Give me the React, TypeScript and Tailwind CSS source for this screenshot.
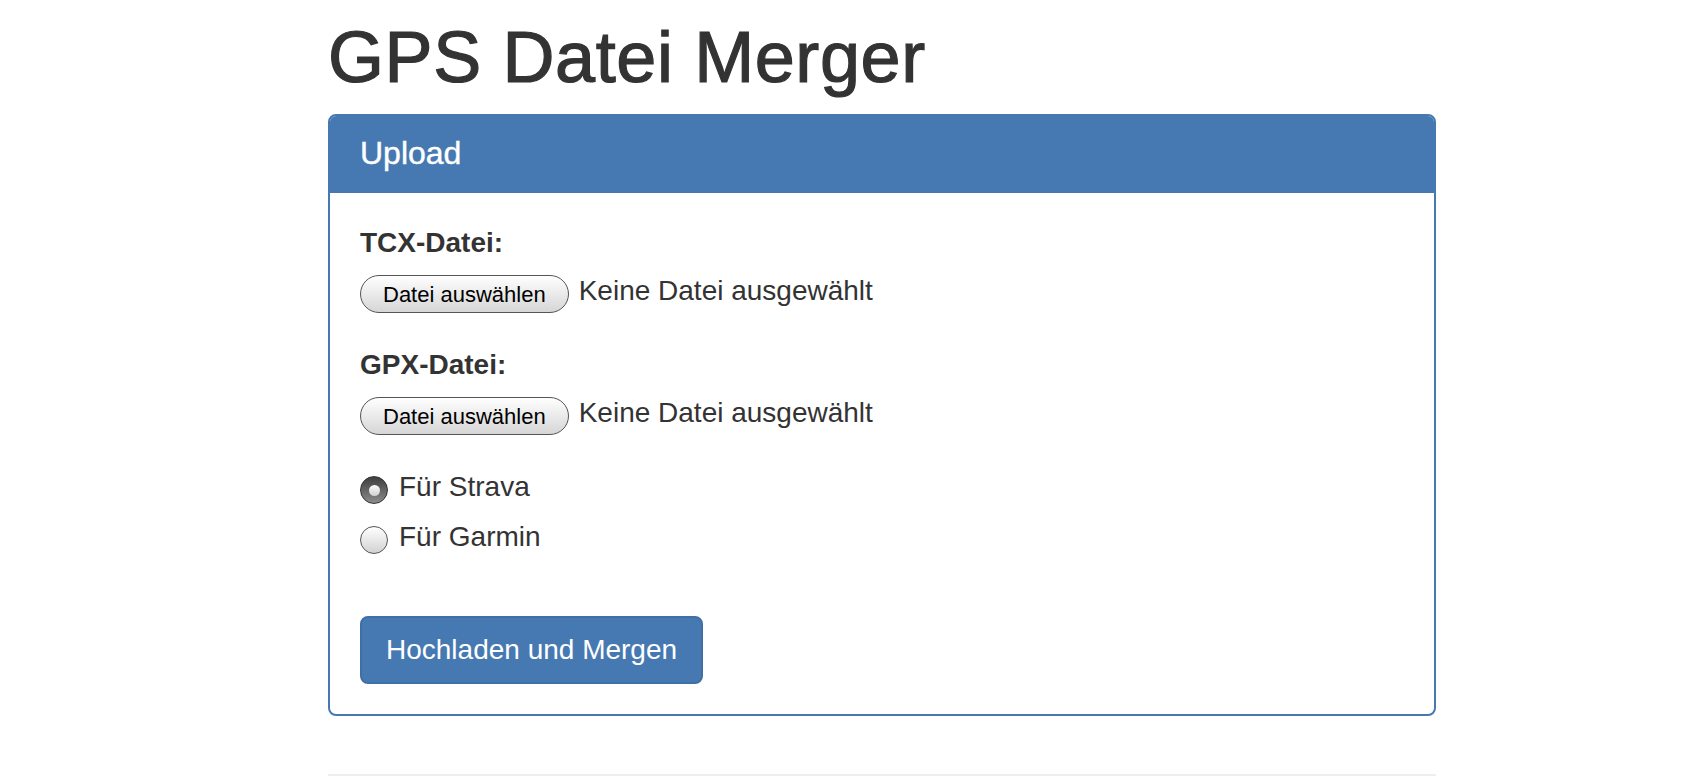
import { useState } from "react";

function FileField({ label }: { label: string }) {
  return (
    <div className="mb-[30px]">
      <label className="block text-[28px] leading-[40px] font-bold mb-[10px]">{label}</label>
      <div className="flex items-center h-[42px]">
        <button className="h-[38px] px-[22px] pt-[2px] rounded-full border-[1.5px] border-[#555] bg-gradient-to-b from-[#ffffff] to-[#d6d6d6] text-[22px] leading-none text-black">
          Datei auswählen
        </button>
        <span className="ml-[10px] text-[28px] leading-[40px] -mt-[6px]">Keine Datei ausgewählt</span>
      </div>
    </div>
  );
}

function Radio({ label, checked, onClick }: { label: string; checked: boolean; onClick: () => void }) {
  return (
    <div className="flex items-center h-[40px] cursor-pointer" onClick={onClick}>
      {checked ? (
        <span className="w-[28px] h-[28px] mt-[6px] rounded-full border-[1.5px] border-[#333] bg-gradient-to-b from-[#3f3f3f] to-[#8c8c8c] flex items-center justify-center">
          <span className="w-[11px] h-[11px] rounded-full bg-gradient-to-b from-[#ffffff] to-[#cfcfcf]" />
        </span>
      ) : (
        <span className="w-[28px] h-[28px] mt-[6px] rounded-full border-[1.5px] border-[#555] bg-gradient-to-b from-[#ffffff] to-[#d2d2d2]" />
      )}
      <span className="ml-[11px] text-[28px] leading-[40px]">{label}</span>
    </div>
  );
}

export default function App() {
  const [target, setTarget] = useState("strava");

  return (
    <div className="min-h-screen bg-white text-[#333] font-['Liberation_Sans',Arial,sans-serif]">
      <div className="ml-[328px] w-[1108px]">
        <h1 className="pt-[18px] mb-[17px] text-[72px] leading-[79px] font-medium tracking-[0.6px] [-webkit-text-stroke:1.2px_#333]">
          GPS Datei Merger
        </h1>

        <div className="border-2 border-[#4679b2] rounded-[8px] overflow-hidden">
          <div className="bg-[#4679b2] px-[30px] pt-[20px] pb-[22px]">
            <h3 className="text-[32px] leading-[35px] text-white [-webkit-text-stroke:0.4px_#fff]">Upload</h3>
          </div>
          <div className="p-[30px]">
            <FileField label="TCX-Datei:" />
            <FileField label="GPX-Datei:" />

            <Radio label="Für Strava" checked={target === "strava"} onClick={() => setTarget("strava")} />
            <div className="mt-[10px]">
              <Radio label="Für Garmin" checked={target === "garmin"} onClick={() => setTarget("garmin")} />
            </div>

            <button className="mt-[59px] px-[24px] py-[12px] rounded-[8px] border-2 border-[#3f6fa5] bg-[#4679b2] text-white text-[28px] leading-[40px]">
              Hochladen und Mergen
            </button>
          </div>
        </div>

        <hr className="mt-[58px] border-t-2 border-[#eeeeee]" />
      </div>
    </div>
  );
}
